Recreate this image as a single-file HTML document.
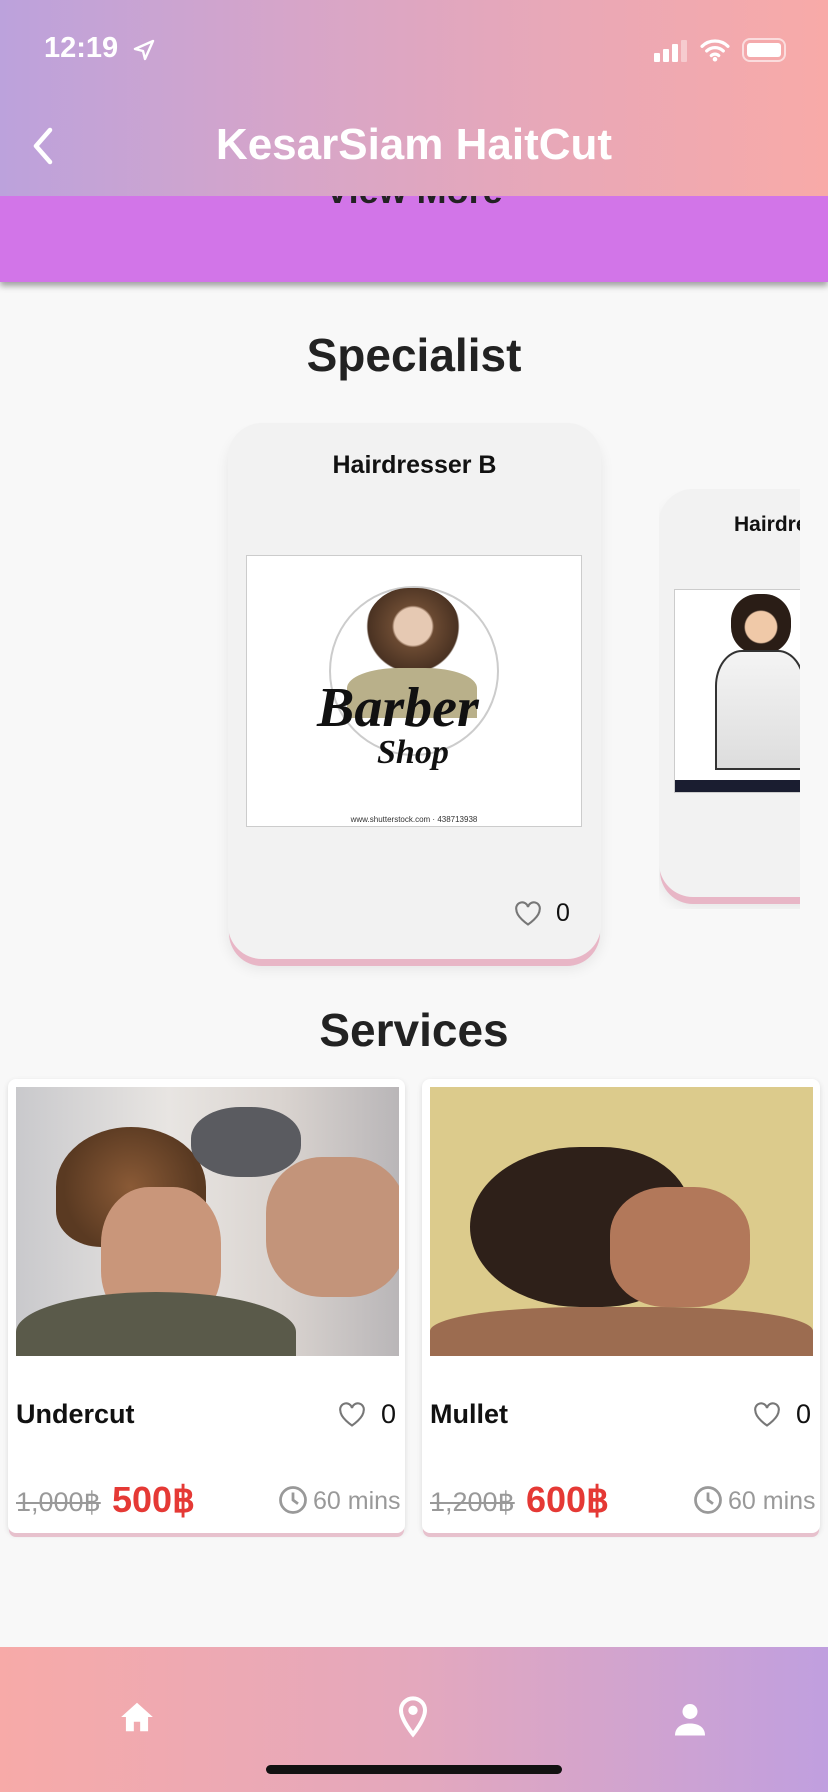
<!DOCTYPE html>
<html><head><meta charset="utf-8"><style>
*{margin:0;padding:0;box-sizing:border-box}
body{width:828px;height:1792px;overflow:hidden;background:#f8f8f8;font-family:"Liberation Sans",sans-serif;position:relative}
.abs{position:absolute}
.hdr{left:0;top:0;width:828px;height:196px;background:linear-gradient(90deg,#bca2dc,#d6a5c9 35%,#eaa8b6 70%,#f8aaa8);z-index:5}
.band{left:0;top:196px;width:828px;height:86px;background:#d275e8;box-shadow:0 4px 6px rgba(0,0,0,.35)}
.card{background:#f2f2f2;border-radius:34px;box-shadow:0 8px 0 -1px #e8b6c6,0 10px 14px rgba(0,0,0,.08)}
.svc{background:#fff;border-radius:8px;box-shadow:0 5px 0 -1px #e7c1cd,0 2px 6px rgba(0,0,0,.12)}
.nav{left:0;top:1647px;width:828px;height:145px;background:linear-gradient(90deg,#f7aaa8,#e4a8bd 50%,#c09fdf)}
</style></head><body>
<div class="abs hdr">
  <div class="abs" style="left:44px;top:32px;color:#fff;font-size:29px;font-weight:bold">12:19</div>
  <svg class="abs" style="left:132px;top:38px" width="24" height="24" viewBox="0 0 24 24"><path d="M21 3L3 11l8 2 2 8z" fill="none" stroke="#fff" stroke-width="2.4" stroke-linejoin="round"/></svg>
  <svg class="abs" style="left:654px;top:40px" width="34" height="22"><rect x="0" y="13" width="6" height="9" rx="1" fill="#fff"/><rect x="9" y="9" width="6" height="13" rx="1" fill="#fff"/><rect x="18" y="4" width="6" height="18" rx="1" fill="#fff"/><rect x="27" y="0" width="6" height="22" rx="1" fill="rgba(255,255,255,.4)"/></svg>
  <svg class="abs" style="left:700px;top:38px" width="30" height="24" viewBox="0 0 32 26"><path d="M2 9a20 20 0 0 1 28 0M7 14a13 13 0 0 1 18 0M12 19a6 6 0 0 1 8 0" fill="none" stroke="#fff" stroke-width="3.5" stroke-linecap="round"/><circle cx="16" cy="23" r="2.5" fill="#fff"/></svg>
  <div class="abs" style="left:742px;top:38px;width:44px;height:24px;border:2.5px solid rgba(255,255,255,.6);border-radius:8px;padding:3px"><div style="background:#fff;width:100%;height:100%;border-radius:3px"></div></div>
  <svg class="abs" style="left:28px;top:126px" width="30" height="40" viewBox="0 0 30 40"><path d="M22 4L8 20l14 16" fill="none" stroke="#fff" stroke-width="4.5" stroke-linecap="round" stroke-linejoin="round"/></svg>
  <div class="abs" style="left:0;top:120px;width:828px;text-align:center;color:#fff;font-size:44px;font-weight:bold;letter-spacing:0px">KesarSiam HaitCut</div>
</div>
<div class="abs band"><div style="position:absolute;left:0;top:-26px;width:828px;text-align:center;font-size:36px;font-weight:bold;color:#222">View More</div></div>

<div class="abs" style="left:0;top:328px;width:828px;text-align:center;font-size:46px;font-weight:bold;color:#222">Specialist</div>

<div class="abs card" style="left:228px;top:423px;width:373px;height:536px">
  <div style="text-align:center;margin-top:28px;font-size:25px;font-weight:bold;color:#111">Hairdresser B</div>
  <div class="abs" style="left:18px;top:132px;width:336px;height:272px;background:#fff;border:1px solid #ccc">
    <div class="abs" style="left:82px;top:30px;width:170px;height:170px;border:2px solid #ccc;border-radius:50%"></div>
    <div class="abs" style="left:118px;top:32px;width:96px;height:96px;border-radius:45% 45% 50% 50%;background:radial-gradient(circle at 50% 40%,#e6c9b3 25%,#6b4a32 28%,#4a3222 60%,transparent 62%)"></div>
    <div class="abs" style="left:100px;top:112px;width:130px;height:50px;background:#b9b08a;border-radius:40% 40% 0 0"></div>
    <div class="abs" style="left:70px;top:120px;width:200px;font-family:'Liberation Serif',serif;font-style:italic;font-size:56px;font-weight:bold;color:#111">Barber</div>
    <div class="abs" style="left:130px;top:178px;font-family:'Liberation Serif',serif;font-style:italic;font-size:34px;font-weight:bold;color:#111">Shop</div>
    <div class="abs" style="left:0;bottom:2px;width:100%;text-align:center;font-size:8px;color:#333">www.shutterstock.com · 438713938</div>
  </div>
  <svg class="abs" style="left:286px;top:478px" width="28" height="26" viewBox="0 0 24 22"><path d="M12 20S2 13.5 2 7.3A5 5 0 0 1 12 5a5 5 0 0 1 10 2.3C22 13.5 12 20 12 20z" fill="none" stroke="#777" stroke-width="1.8"/></svg>
  <div class="abs" style="left:328px;top:476px;font-size:25px;color:#111">0</div>
</div>

<div class="abs" style="left:659px;top:489px;width:141px;height:420px;overflow:hidden">
  <div class="abs card" style="left:0;top:0;width:200px;height:408px">
    <div class="abs" style="left:75px;top:24px;font-size:21px;font-weight:bold;color:#111;white-space:nowrap">Hairdresser</div>
    <div class="abs" style="left:15px;top:100px;width:180px;height:204px;background:#fff;border:1px solid #ccc">
      <div class="abs" style="left:56px;top:4px;width:60px;height:60px;border-radius:45%;background:radial-gradient(circle at 50% 55%,#f0c9a8 35%,#2a1d16 38%)"></div>
      <div class="abs" style="left:40px;top:60px;width:90px;height:120px;background:linear-gradient(#f4f4f4,#ddd);border:2px solid #333;border-radius:30% 30% 0 0"></div>
      <div class="abs" style="left:0;bottom:0;width:100%;height:12px;background:#1a1d30"></div>
    </div>
  </div>
</div>

<div class="abs" style="left:0;top:1003px;width:828px;text-align:center;font-size:46px;font-weight:bold;color:#222">Services</div>

<div class="abs svc" style="left:8px;top:1079px;width:397px;height:454px">
  <div class="abs" style="left:8px;top:8px;width:383px;height:269px;overflow:hidden;background:linear-gradient(90deg,#c9c9cc,#e8e5e2 40%,#d9d3cf 70%,#b9b6b8)">
    <div class="abs" style="left:40px;top:40px;width:150px;height:120px;border-radius:50% 50% 30% 30%;background:radial-gradient(circle,#8a5a36,#5a3a22 70%)"></div>
    <div class="abs" style="left:85px;top:100px;width:120px;height:140px;border-radius:40%;background:#c9967a"></div>
    <div class="abs" style="left:0;top:205px;width:280px;height:80px;border-radius:50% 50% 0 0;background:#5a5a4a"></div>
    <div class="abs" style="left:175px;top:20px;width:110px;height:70px;border-radius:45%;background:#5a5b60"></div>
    <div class="abs" style="left:250px;top:70px;width:140px;height:140px;border-radius:40%;background:#c3947a"></div>
  </div>
  <div class="abs" style="left:8px;top:320px;font-size:27px;font-weight:bold;color:#111">Undercut</div>
  <svg class="abs" style="left:330px;top:323px" width="28" height="26" viewBox="0 0 24 22"><path d="M12 20S2 13.5 2 7.3A5 5 0 0 1 12 5a5 5 0 0 1 10 2.3C22 13.5 12 20 12 20z" fill="none" stroke="#777" stroke-width="1.8"/></svg>
  <div class="abs" style="left:373px;top:320px;font-size:27px;color:#111">0</div>
  <div class="abs" style="left:8px;top:408px;font-size:27px;color:#999;text-decoration:line-through">1,000฿</div>
  <div class="abs" style="left:104px;top:400px;font-size:36px;font-weight:bold;color:#e53935">500฿</div>
  <svg class="abs" style="left:270px;top:406px" width="30" height="30" viewBox="0 0 24 24"><circle cx="12" cy="12" r="10" fill="none" stroke="#999" stroke-width="2.2"/><path d="M12 6v6l4 3" fill="none" stroke="#999" stroke-width="2.2"/></svg>
  <div class="abs" style="left:305px;top:408px;font-size:25px;color:#999">60 mins</div>
</div>

<div class="abs svc" style="left:422px;top:1079px;width:398px;height:454px">
  <div class="abs" style="left:8px;top:8px;width:383px;height:269px;overflow:hidden;background:#dccb8c">
    <div class="abs" style="left:40px;top:60px;width:220px;height:160px;border-radius:50% 40% 40% 50%;background:#2e2019"></div>
    <div class="abs" style="left:180px;top:100px;width:140px;height:120px;border-radius:40%;background:#b2785a"></div>
    <div class="abs" style="left:0;top:220px;width:383px;height:60px;border-radius:40% 40% 0 0;background:#9c6c50"></div>
  </div>
  <div class="abs" style="left:8px;top:320px;font-size:27px;font-weight:bold;color:#111">Mullet</div>
  <svg class="abs" style="left:331px;top:323px" width="28" height="26" viewBox="0 0 24 22"><path d="M12 20S2 13.5 2 7.3A5 5 0 0 1 12 5a5 5 0 0 1 10 2.3C22 13.5 12 20 12 20z" fill="none" stroke="#777" stroke-width="1.8"/></svg>
  <div class="abs" style="left:374px;top:320px;font-size:27px;color:#111">0</div>
  <div class="abs" style="left:8px;top:408px;font-size:27px;color:#999;text-decoration:line-through">1,200฿</div>
  <div class="abs" style="left:104px;top:400px;font-size:36px;font-weight:bold;color:#e53935">600฿</div>
  <svg class="abs" style="left:271px;top:406px" width="30" height="30" viewBox="0 0 24 24"><circle cx="12" cy="12" r="10" fill="none" stroke="#999" stroke-width="2.2"/><path d="M12 6v6l4 3" fill="none" stroke="#999" stroke-width="2.2"/></svg>
  <div class="abs" style="left:306px;top:408px;font-size:25px;color:#999">60 mins</div>
</div>

<div class="abs nav">
  <svg class="abs" style="left:118px;top:52px" width="38" height="36" viewBox="0 0 24 22"><path d="M12 2L2 11h3v9h5v-6h4v6h5v-9h3z" fill="#fff"/></svg>
  <svg class="abs" style="left:397px;top:48px" width="32" height="44" viewBox="0 0 24 32"><path d="M12 2a9 9 0 0 0-9 9c0 7 9 18 9 18s9-11 9-18a9 9 0 0 0-9-9z" fill="none" stroke="#fff" stroke-width="3"/><circle cx="12" cy="11" r="3.5" fill="#fff"/></svg>
  <svg class="abs" style="left:672px;top:54px" width="36" height="36" viewBox="0 0 24 24"><circle cx="12" cy="7" r="5" fill="#fff"/><path d="M2 23c0-6 5-8 10-8s10 2 10 8z" fill="#fff"/></svg>
  <div class="abs" style="left:266px;top:118px;width:296px;height:9px;border-radius:5px;background:#111"></div>
</div>
</body></html>
